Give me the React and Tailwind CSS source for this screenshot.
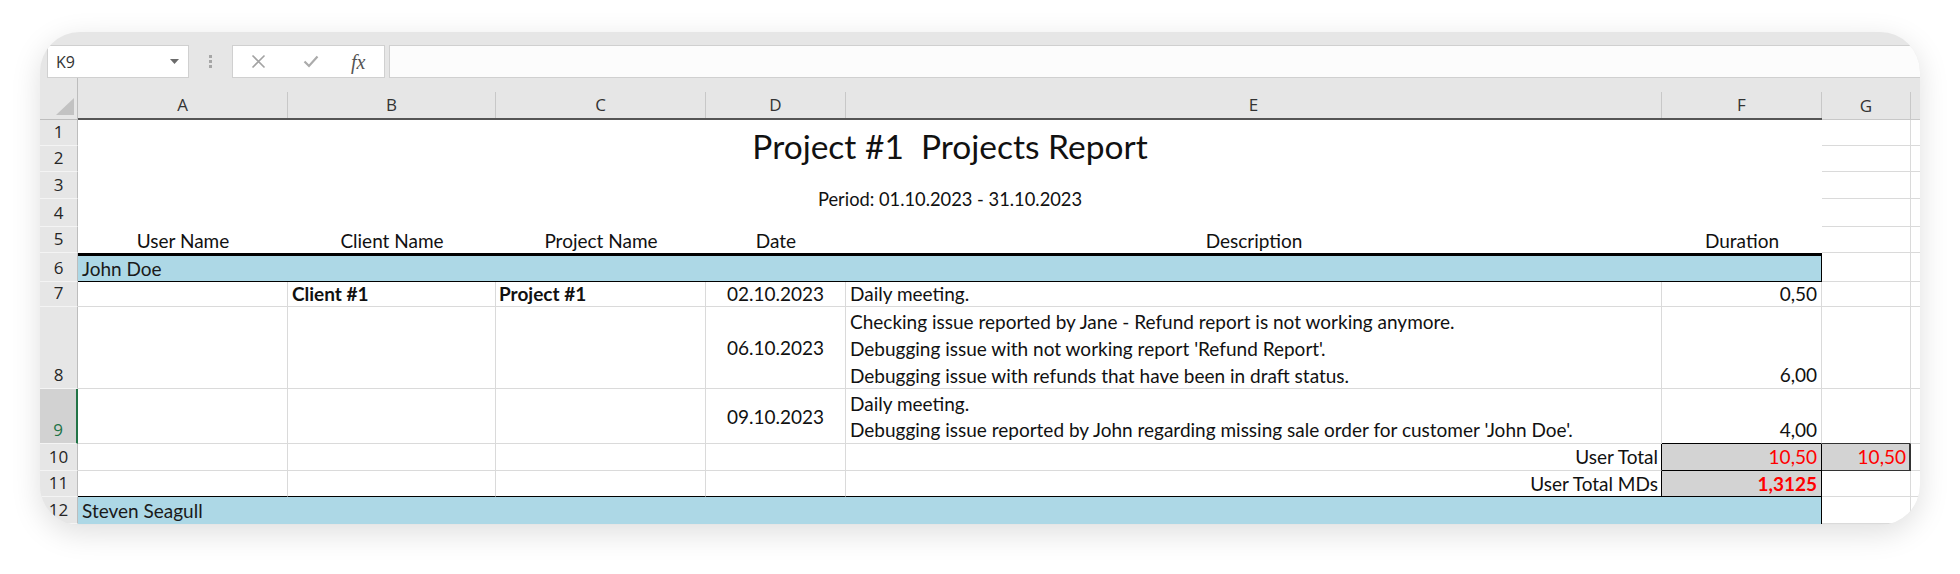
import React from "react";

const G = "border-[#dadada]";

function RH({ cls, n, sel }) {
  return (
    <div
      className={
        cls +
        " flex items-end justify-center border-b border-[#f4f4f4] text-[17px] leading-[24px] " +
        (sel
          ? "bg-[#d2d2d2] text-[#217346] border-r-2 border-r-[#217346]"
          : "bg-[#e6e6e6] text-[#262626] border-r border-r-[#bdbdbd]")
      }
    >
      <span className="pb-[1px]">{n}</span>
    </div>
  );
}

function FormulaBar() {
  return (
    <div className="h-[33px] shrink-0 flex pl-[7px] font-['Open_Sans',sans-serif]">
      <div className="w-[142px] border border-[#d0d0d0] bg-white flex items-center justify-between pl-[8px] pr-[9px]">
        <span className="text-[16px] text-[#333]">K9</span>
        <svg width="9" height="5" viewBox="0 0 9 5">
          <polygon points="0,0 9,0 4.5,5" fill="#6b6b6b" />
        </svg>
      </div>
      <div className="w-[43px] flex items-center justify-center">
        <div className="flex flex-col gap-[2px]">
          <div className="w-[3px] h-[3px] bg-[#a6a6a6]" />
          <div className="w-[3px] h-[3px] bg-[#a6a6a6]" />
          <div className="w-[3px] h-[3px] bg-[#a6a6a6]" />
        </div>
      </div>
      <div className="w-[153px] border border-[#d0d0d0] bg-white flex items-center pl-[18px]">
        <svg width="15" height="15" viewBox="0 0 15 15">
          <path d="M1.5 1.5 L13.5 13.5 M13.5 1.5 L1.5 13.5" stroke="#a3a3a3" strokeWidth="1.6" />
        </svg>
        <svg width="16" height="13" viewBox="0 0 16 13" className="ml-[37px]">
          <path d="M1.5 6.5 L6 11 L14.5 1.5" stroke="#ababab" strokeWidth="2.2" fill="none" />
        </svg>
        <span className="ml-[32px] font-['Liberation_Serif',serif] italic text-[20px] text-[#555] leading-none">
          fx
        </span>
      </div>
      <div className="w-[4px]" />
      <div className="flex-1 border border-r-0 border-[#d0d0d0] bg-[#fcfcfc]" />
    </div>
  );
}

function ColHead({ cls, label }) {
  return (
    <div className={cls + " flex flex-col border-b-2 border-b-[#555]"}>
      <div className="h-[14px]" />
      <div className="flex-1 flex items-center justify-center border-r border-[#c8c8c8] pb-[1px]">
        {label}
      </div>
    </div>
  );
}

function ColumnHeader() {
  return (
    <div className="h-[42px] shrink-0 flex font-['Open_Sans',sans-serif] text-[17px] text-[#333]">
      <div className="w-[38px] flex flex-col border-r border-b border-[#bdbdbd] items-end justify-end pr-[3px] pb-[4px]">
        <svg width="18" height="17" viewBox="0 0 18 17">
          <polygon points="18,0 18,17 0,17" fill="#c2c2c2" />
        </svg>
      </div>
      <ColHead cls="w-[210px]" label="A" />
      <ColHead cls="w-[208px]" label="B" />
      <ColHead cls="w-[210px]" label="C" />
      <ColHead cls="w-[140px]" label="D" />
      <ColHead cls="w-[816px]" label="E" />
      <ColHead cls="w-[160px]" label="F" />
      <div className="w-[89px] flex flex-col border-b border-[#c8c8c8]">
        <div className="h-[14px]" />
        <div className="flex-1 flex items-center justify-center border-r border-[#c8c8c8]">G</div>
      </div>
      <div className="flex-1 border-b border-[#c8c8c8]" />
    </div>
  );
}

function RowHeaders() {
  return (
    <div className="w-[38px] shrink-0 flex flex-col font-['Open_Sans',sans-serif]">
      <RH cls="h-[26px]" n="1" />
      <RH cls="h-[26px]" n="2" />
      <RH cls="h-[27px]" n="3" />
      <RH cls="h-[28px]" n="4" />
      <RH cls="h-[26px]" n="5" />
      <RH cls="h-[29px]" n="6" />
      <RH cls="h-[25px]" n="7" />
      <RH cls="h-[82px]" n="8" />
      <RH cls="h-[55px]" n="9" sel />
      <RH cls="h-[27px]" n="10" />
      <RH cls="h-[26px]" n="11" />
      <RH cls="h-[27px]" n="12" />
    </div>
  );
}

function Body() {
  return (
    <div className="w-[1842px] flex flex-col bg-white font-['Lato',sans-serif] text-[19px] text-[#111]">
      {/* rows 1-4 */}
      <div className="h-[107px] flex">
        <div className="w-[1744px] flex flex-col">
          <div className="h-[52px] flex items-center justify-center text-[33.5px] whitespace-pre">
            Project #1  Projects Report
          </div>
          <div className="h-[55px] flex items-center justify-center text-[18.3px]">
            Period: 01.10.2023 - 31.10.2023
          </div>
        </div>
        <div className={"w-[89px] flex flex-col border-r " + G}>
          <div className={"h-[26px] border-b " + G} />
          <div className={"h-[26px] border-b " + G} />
          <div className={"h-[27px] border-b " + G} />
          <div className={"h-[28px] border-b " + G} />
        </div>
        <div className="flex-1 flex flex-col">
          <div className={"h-[26px] border-b " + G} />
          <div className={"h-[26px] border-b " + G} />
          <div className={"h-[27px] border-b " + G} />
          <div className={"h-[28px] border-b " + G} />
        </div>
      </div>

      {/* row 5 */}
      <div className="h-[26px] flex leading-[25px]">
        <div className="w-[210px] flex items-end justify-center">User Name</div>
        <div className="w-[208px] flex items-end justify-center">Client Name</div>
        <div className="w-[210px] flex items-end justify-center">Project Name</div>
        <div className="w-[140px] flex items-end justify-center">Date</div>
        <div className="w-[816px] flex items-end justify-center">Description</div>
        <div className="w-[160px] flex items-end justify-center">Duration</div>
        <div className={"w-[89px] border-r border-b " + G} />
        <div className={"flex-1 border-b " + G} />
      </div>

      {/* row 6 */}
      <div className="h-[29px] flex">
        <div className="w-[1744px] bg-[#add8e6] border-t-[3px] border-b border-r border-black flex items-end pl-[4px] leading-[25px] text-[#1a1a1a]">
          John Doe
        </div>
        <div className={"w-[89px] border-r border-b " + G} />
        <div className={"flex-1 border-b " + G} />
      </div>

      {/* row 7 */}
      <div className="h-[25px] flex leading-[24px] overflow-hidden">
        <div className={"w-[210px] border-r border-b " + G} />
        <div className={"w-[208px] border-r border-b font-bold pl-[4px] flex items-end " + G}>Client #1</div>
        <div className={"w-[210px] border-r border-b font-bold pl-[3px] flex items-end " + G}>Project #1</div>
        <div className={"w-[140px] border-r border-b flex items-end justify-center " + G}>02.10.2023</div>
        <div className={"w-[816px] border-r border-b pl-[4px] flex items-end " + G}>Daily meeting.</div>
        <div className={"w-[160px] border-r border-b pr-[4px] flex items-end justify-end " + G}>0,50</div>
        <div className={"w-[89px] border-r border-b " + G} />
        <div className={"flex-1 border-b " + G} />
      </div>

      {/* row 8 */}
      <div className="h-[82px] flex leading-[27px]">
        <div className={"w-[210px] border-r border-b " + G} />
        <div className={"w-[208px] border-r border-b " + G} />
        <div className={"w-[210px] border-r border-b " + G} />
        <div className={"w-[140px] border-r border-b flex items-center justify-center " + G}>06.10.2023</div>
        <div className={"w-[816px] border-r border-b pl-[4px] pt-[1px] flex flex-col " + G}>
          <div>Checking issue reported by Jane - Refund report is not working anymore.</div>
          <div>Debugging issue with not working report 'Refund Report'.</div>
          <div>Debugging issue with refunds that have been in draft status.</div>
        </div>
        <div className={"w-[160px] border-r border-b pr-[4px] flex items-end justify-end " + G}>6,00</div>
        <div className={"w-[89px] border-r border-b " + G} />
        <div className={"flex-1 border-b " + G} />
      </div>

      {/* row 9 */}
      <div className="h-[55px] flex leading-[27px]">
        <div className={"w-[210px] border-r border-b " + G} />
        <div className={"w-[208px] border-r border-b " + G} />
        <div className={"w-[210px] border-r border-b " + G} />
        <div className={"w-[140px] border-r border-b flex items-center justify-center " + G}>09.10.2023</div>
        <div className={"w-[816px] border-r border-b pl-[4px] pt-[1px] flex flex-col " + G}>
          <div className="h-[26px]">Daily meeting.</div>
          <div className="h-[27px]">Debugging issue reported by John regarding missing sale order for customer 'John Doe'.</div>
        </div>
        <div className="w-[160px] border-r border-r-[#dadada] border-b border-b-black pr-[4px] flex items-end justify-end">4,00</div>
        <div className="w-[89px] border-r border-r-[#dadada] border-b border-b-[#333]" />
        <div className={"flex-1 border-b " + G} />
      </div>

      {/* row 10 */}
      <div className="h-[27px] flex leading-[26px]">
        <div className={"w-[210px] border-r border-b " + G} />
        <div className={"w-[208px] border-r border-b " + G} />
        <div className={"w-[210px] border-r border-b " + G} />
        <div className={"w-[140px] border-r border-b " + G} />
        <div className="w-[816px] border-r border-r-black border-b border-b-[#dadada] pr-[3px] flex items-end justify-end">
          User Total
        </div>
        <div className="w-[160px] bg-[#d3d3d3] border-r border-b border-black pr-[4px] flex items-end justify-end text-[#ff0000]">
          10,50
        </div>
        <div className="w-[89px] bg-[#d3d3d3] border-r-2 border-b border-[#333] pr-[3px] flex items-end justify-end text-[#ff0000]">
          10,50
        </div>
        <div className={"flex-1 border-b " + G} />
      </div>

      {/* row 11 */}
      <div className="h-[26px] flex leading-[25px]">
        <div className="w-[210px] border-r border-r-[#dadada] border-b border-b-black" />
        <div className="w-[208px] border-r border-r-[#dadada] border-b border-b-black" />
        <div className="w-[210px] border-r border-r-[#dadada] border-b border-b-black" />
        <div className="w-[140px] border-r border-r-[#dadada] border-b border-b-black" />
        <div className="w-[816px] border-r border-b border-black pr-[3px] flex items-end justify-end">
          User Total MDs
        </div>
        <div className="w-[160px] bg-[#d3d3d3] border-r border-b border-black pr-[4px] flex items-end justify-end text-[#ff0000] font-bold">
          1,3125
        </div>
        <div className={"w-[89px] border-r border-b " + G} />
        <div className={"flex-1 border-b " + G} />
      </div>

      {/* row 12 */}
      <div className="h-[27px] flex leading-[26px]">
        <div className="w-[1744px] bg-[#add8e6] border-r border-black flex items-end pl-[4px] text-[#1a1a1a]">
          Steven Seagull
        </div>
        <div className={"w-[89px] border-r border-b " + G} />
        <div className={"flex-1 border-b " + G} />
      </div>
    </div>
  );
}

export default function App() {
  return (
    <div className="w-[1960px] h-[574px] bg-white overflow-hidden">
      <div className="ml-[40px] mt-[32px] w-[1880px] h-[493px] rounded-[40px] overflow-hidden bg-[#e6e6e6] shadow-[0_8px_30px_rgba(0,0,0,0.13)] flex flex-col">
        <div className="h-[13px] shrink-0" />
        <FormulaBar />
        <ColumnHeader />
        <div className="flex">
          <RowHeaders />
          <Body />
        </div>
      </div>
    </div>
  );
}
